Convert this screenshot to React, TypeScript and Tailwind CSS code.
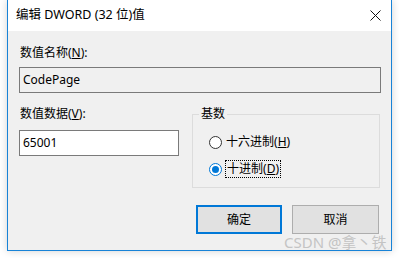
import React from 'react';

const font = {
  fontFamily: '"Segoe UI", "Noto Sans", "Noto Sans CJK SC", sans-serif',
};

const Radio = ({ checked }: { checked?: boolean }) => (
  <span
    className={`flex h-[13px] w-[13px] items-center justify-center rounded-full border bg-white ${
      checked ? 'border-[#0078d7]' : 'border-[#333333]'
    }`}
  >
    {checked && <span className="h-[7px] w-[7px] rounded-full bg-[#0078d7]" />}
  </span>
);

export default function App() {
  return (
    <div className="relative h-[258px] w-[399px] overflow-hidden bg-white text-[12px] text-black" style={font}>
      <div className="ml-[7px] flex h-[251px] w-[385px] flex-col border border-t-0 border-[#1883d7] bg-[#f0f0f0] shadow-[0_0_8px_rgba(0,0,0,0.18)]">
        {/* title bar */}
        <div className="flex h-[31px] items-center justify-between bg-white pl-[8px] pr-[9px]">
          <span className="text-[12.5px] leading-none">编辑 DWORD (32 位)值</span>
          <svg width="11" height="11" viewBox="0 0 11 11" className="mr-[1px]">
            <path d="M0.5 0.5 L10.5 10.5 M10.5 0.5 L0.5 10.5" stroke="#111" strokeWidth="1" />
          </svg>
        </div>

        {/* body */}
        <div className="flex flex-col px-[11px] pt-[14px]">
          <div className="pl-[1px] leading-[16px]">
            数值名称(<span className="underline">N</span>):
          </div>
          <div className="mt-[6px] flex h-[26px] w-[362px] items-center border border-[#7a7a7a] bg-[#f0f0f0] px-[3px]">
            CodePage
          </div>

          <div className="mt-[13px] flex gap-[13px]">
            <div className="flex w-[161px] flex-col">
              <div className="pl-[1px] leading-[16px]">
                数值数据(<span className="underline">V</span>):
              </div>
              <div className="mt-[8px] flex h-[26px] items-center border border-[#7a7a7a] bg-white px-[3px]">
                65001
              </div>
            </div>

            <div className="relative mt-[8px] flex h-[74px] w-[189px] flex-col gap-[10px] border border-[#dcdcdc] pl-[16px] pt-[19px]">
              <span className="absolute left-[6px] top-[-9px] bg-[#f0f0f0] px-[2px] leading-[16px]">基数</span>
              <label className="flex items-center gap-[3px] leading-[16px]">
                <Radio />
                <span className="px-[1px]">
                  十六进制(<span className="underline">H</span>)
                </span>
              </label>
              <label className="flex items-center gap-[3px] leading-[16px]">
                <Radio checked />
                <span className="border border-dotted border-black px-[1px]">
                  十进制(<span className="underline">D</span>)
                </span>
              </label>
            </div>
          </div>

          <div className="mt-[17px] flex justify-end gap-[10px] pr-[1px]">
            <button className="flex h-[29px] w-[86px] items-center justify-center border-2 border-[#0078d7] bg-[#e1e1e1]">
              确定
            </button>
            <button className="flex h-[29px] w-[87px] items-center justify-center border border-[#adadad] bg-[#e1e1e1]">
              取消
            </button>
          </div>
        </div>
      </div>

      <span className="absolute left-[284px] top-[233px] text-[15px] leading-[18px] text-[#c4c4c4]">
        CSDN @拿丶铁
      </span>
    </div>
  );
}
